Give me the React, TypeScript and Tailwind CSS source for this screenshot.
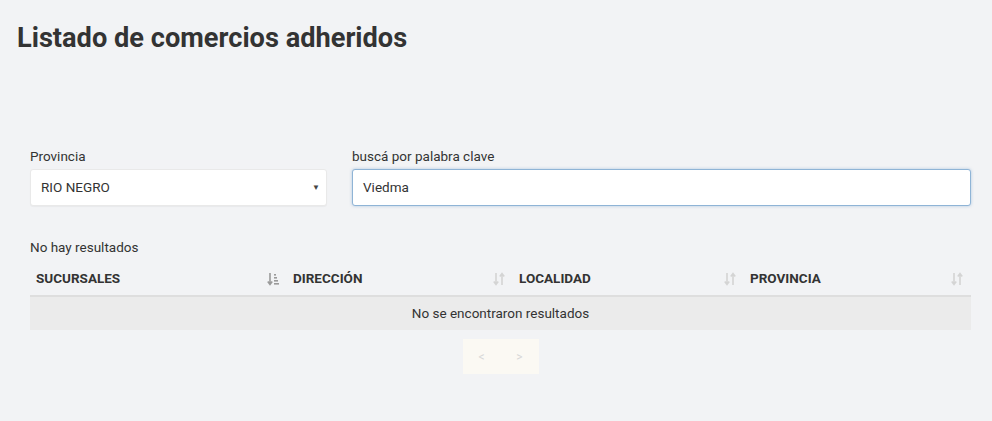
import React from "react";

function SortIcon({ active }: { active?: boolean }) {
  const c = active ? "#9a9a9a" : "#d4d4d4";
  return (
    <svg width="12" height="14" viewBox="0 0 12 14" fill="none">
      <path d="M3 1v11M0.8 9.5L3 12.5L5.2 9.5" stroke={c} strokeWidth="1.6" />
      {active ? (
        <g fill={c}>
          <rect x="7" y="2" width="2" height="1.6" />
          <rect x="7" y="5" width="3" height="1.6" />
          <rect x="7" y="8" width="4" height="1.6" />
          <rect x="7" y="11" width="5" height="1.6" />
        </g>
      ) : (
        <path d="M9 13V2M6.8 4.5L9 1.5L11.2 4.5" stroke={c} strokeWidth="1.6" />
      )}
    </svg>
  );
}

export default function App() {
  const cols = [
    { t: "SUCURSALES", w: "w-[257px]", active: true },
    { t: "DIRECCIÓN", w: "w-[226px]" },
    { t: "LOCALIDAD", w: "w-[231px]" },
    { t: "PROVINCIA", w: "flex-1" },
  ];
  return (
    <div
      className="w-[992px] h-[421px] bg-[#f2f3f5] text-[#333] overflow-hidden"
      style={{ fontFamily: "Roboto, 'Liberation Sans', sans-serif" }}
    >
      <h1 className="pl-[17px] pt-[20px] text-[27.2px] font-bold leading-[36px] text-[#333]">
        Listado de comercios adheridos
      </h1>
      <div className="mx-[30px] mt-[92px] w-[941px]">
        <div className="flex gap-[25px]">
          <div className="w-[297px]">
            <div className="text-[13.5px] leading-[16px] mb-[5px]">Provincia</div>
            <div className="h-[37px] bg-white rounded-[3px] border border-[#e9e9e9] flex items-center justify-between pl-[10px] pr-[6px] text-[13.5px] shadow-[0_1px_1px_rgba(0,0,0,0.04)]">
              <span>RIO NEGRO</span>
              <span className="text-[8px] text-[#444]">▼</span>
            </div>
          </div>
          <div className="flex-1">
            <div className="text-[13.5px] leading-[16px] mb-[5px]">buscá por palabra clave</div>
            <div className="h-[37px] bg-white rounded-[3px] border border-[#8fb4d6] shadow-[0_0_3px_rgba(102,152,204,0.5)] flex items-center pl-[10px] text-[13.5px]">
              Viedma
            </div>
          </div>
        </div>
        <div className="mt-[33px] text-[13.5px] leading-[16px]">No hay resultados</div>
        <div className="mt-[10px] flex h-[32px] pb-[3px] items-center border-b-2 border-[#dedede]">
          {cols.map((c) => (
            <div key={c.t} className={`${c.w} flex items-center justify-between pl-[6px] pr-[8px] text-[13.5px] font-bold`}>
              <span>{c.t}</span>
              <SortIcon active={c.active} />
            </div>
          ))}
        </div>
        <div className="h-[33px] bg-[#ebebeb] flex items-center justify-center text-[13.5px]">
          No se encontraron resultados
        </div>
        <div className="mt-[9px] flex justify-center">
          <div className="flex h-[35px] bg-[#fbf9f3]">
            <div className="w-[38px] flex items-center justify-center text-[12px] text-[#d8d8d8]">&lt;</div>
            <div className="w-[38px] flex items-center justify-center text-[12px] text-[#d8d8d8]">&gt;</div>
          </div>
        </div>
      </div>
    </div>
  );
}
